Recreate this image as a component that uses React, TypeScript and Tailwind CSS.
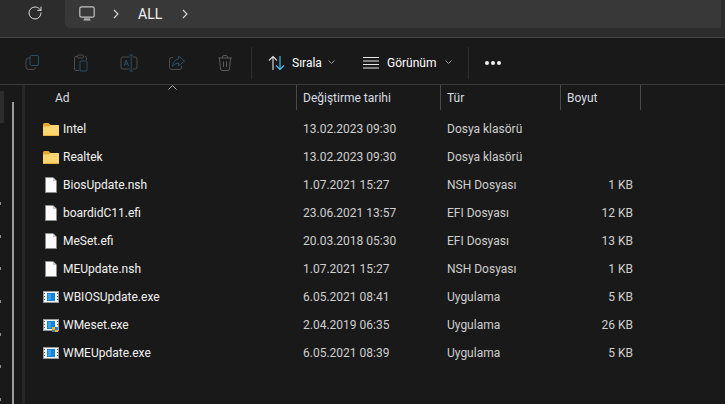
import { RotateCw } from "lucide-react";

type Kind = "folder" | "file" | "exe" | "setup";

interface Row {
    name: string
    date: string
    type: string
    size: string
    kind: Kind
}

const rows: Row[] = [
    { name: "Intel", date: "13.02.2023 09:30", type: "Dosya klasörü", size: "", kind: "folder" },
    { name: "Realtek", date: "13.02.2023 09:30", type: "Dosya klasörü", size: "", kind: "folder" },
    { name: "BiosUpdate.nsh", date: "1.07.2021 15:27", type: "NSH Dosyası", size: "1 KB", kind: "file" },
    { name: "boardidC11.efi", date: "23.06.2021 13:57", type: "EFI Dosyası", size: "12 KB", kind: "file" },
    { name: "MeSet.efi", date: "20.03.2018 05:30", type: "EFI Dosyası", size: "13 KB", kind: "file" },
    { name: "MEUpdate.nsh", date: "1.07.2021 15:27", type: "NSH Dosyası", size: "1 KB", kind: "file" },
    { name: "WBIOSUpdate.exe", date: "6.05.2021 08:41", type: "Uygulama", size: "5 KB", kind: "exe" },
    { name: "WMeset.exe", date: "2.04.2019 06:35", type: "Uygulama", size: "26 KB", kind: "setup" },
    { name: "WMEUpdate.exe", date: "6.05.2021 08:39", type: "Uygulama", size: "5 KB", kind: "exe" },
];

const FileIcon = ({ kind }: { kind: Kind }) => {
    if (kind === "folder") {
        return (
            <svg width="16" height="13" viewBox="0 1 16 13" className="shrink-0">
                <path d="M0 2.5 Q0 1 1.5 1 H5.5 L7.5 3 H16 V5 H0 Z" fill="#e9a52f" />
                <path d="M0 4.5 H6 L7.5 3 H14.5 Q16 3 16 4.5 V12.5 Q16 14 14.5 14 H1.5 Q0 14 0 12.5 Z" fill="#fbd56f" />
                <rect x="0" y="13" width="16" height="1" fill="#eab13f" />
            </svg>
        )
    }
    if (kind === "file") {
        return (
            <svg width="16" height="16" viewBox="0 0 16 16" className="shrink-0">
                <path d="M2.5 .5 H10 L13.5 4 V15.5 H2.5 Z" fill="#fbfbfb" stroke="#8c8c8c" />
                <path d="M10 .5 V4 H13.5 Z" fill="#c8c8c8" />
            </svg>
        )
    }
    return (
        <svg width="16" height="16" viewBox="0 0 16 16" className="shrink-0">
            <rect x="0" y="2" width="16" height="12" fill="#9a9a9a" />
            <rect x="1" y="3" width="14" height="10" fill="#f4f4f4" />
            <path d="M1 4 h1 v1 h-1 z M1 7 h1 v1 h-1 z M1 10 h1 v1 h-1 z M14 4 h1 v1 h-1 z M14 7 h1 v1 h-1 z M14 10 h1 v1 h-1 z" fill="#555555" />
            <rect x="4" y="4" width="8" height="8" fill="#1583d8" />
            <rect x="5" y="5" width="3" height="6" fill="#3aa0ea" />
            {kind === "setup" && (
                <>
                    <rect x="9" y="10" width="3" height="3" fill="#f4b400" />
                    <rect x="12" y="10" width="3" height="3" fill="#2f7fd6" />
                    <rect x="9" y="13" width="3" height="2" fill="#2f7fd6" />
                    <rect x="12" y="13" width="3" height="2" fill="#f4b400" />
                </>
            )}
        </svg>
    )
}

const ToolIcon = ({ children }: { children: React.ReactNode }) => (
    <div className="w-[48px] flex justify-center">
        <svg width="18" height="18" viewBox="0 0 18 18" fill="none" strokeWidth="1">{children}</svg>
    </div>
)

const Chevron = () => (
    <svg width="7" height="5" viewBox="0 0 7 5" fill="none" stroke="#9a9a9a" strokeWidth="1">
        <path d="M.5 .5 L3.5 3.5 L6.5 .5" />
    </svg>
)

const Crumb = () => (
    <svg width="6" height="10" viewBox="0 0 6 10" fill="none" stroke="#d8d8d8" strokeWidth="1.1">
        <path d="M1 1 L5 5 L1 9" />
    </svg>
)

export default function App() {
    return (
        <div className="w-[725px] h-[404px] overflow-hidden flex flex-col bg-[#191919] text-[12px] text-[#e8e8e8]" style={{ fontFamily: 'Roboto, "Noto Sans", sans-serif' }}>
            {/* adres cubugu */}
            <div className="h-[38px] shrink-0 flex bg-[#2c2c2c] border-b border-[#454545]">
                <div className="w-[65px] flex pl-[27px] pt-[5px] text-[#e4e4e4]">
                    <RotateCw size={16} strokeWidth={1.4} />
                </div>
                <div className="w-[656px] h-[28px] flex items-center pl-[14px] bg-[#383838] rounded-bl-[5px] rounded-br-[2px]">
                    <svg width="16" height="16" viewBox="0 0 16 16" fill="none" stroke="#c4c4c4" strokeWidth="1.2">
                        <rect x=".8" y=".8" width="14.4" height="10.4" rx="1.8" />
                        <path d="M4.5 14 H11.5 M6 12 V14 M8 12 V14 M10 12 V14" />
                    </svg>
                    <div className="ml-[18px] flex"><Crumb /></div>
                    <span className="ml-[19px] text-[14px] text-[#f2f2f2]">ALL</span>
                    <div className="ml-[20px] flex"><Crumb /></div>
                </div>
            </div>

            {/* arac cubugu */}
            <div className="h-[47px] shrink-0 flex items-center pl-[9px] pt-[3px] border-b border-[#3c3c3c]">
                <ToolIcon>
                    <rect x="6" y="1.5" width="8.5" height="10" rx="1.5" stroke="#25506b" />
                    <path d="M6 4 H4.5 Q2 4 2 6.5 V13 Q2 15.5 4.5 15.5 H9 Q11.5 15.5 11.5 13.5" stroke="#4d4d4d" />
                </ToolIcon>
                <ToolIcon>
                    <path d="M6 2.5 H4 Q2.5 2.5 2.5 4 V15 Q2.5 16.5 4 16.5 H7 M13 2.5 Q14.5 2.5 14.5 4 V6" stroke="#4d4d4d" />
                    <rect x="5.5" y="1" width="6" height="3" rx="1" stroke="#4d4d4d" />
                    <rect x="8" y="7" width="7" height="10" rx="1" stroke="#25506b" />
                </ToolIcon>
                <ToolIcon>
                    <path d="M9.5 3 H3 Q1 3 1 5 V13 Q1 15 3 15 H9.5 M13 3 H15 Q17 3 17 5 V13 Q17 15 15 15 H13" stroke="#4d4d4d" />
                    <path d="M11.2 1 V17 M9.5 1 H13 M9.5 17 H13" stroke="#25506b" />
                    <path d="M4 12 L6.3 6 L8.6 12 M5 10 H7.6" stroke="#25506b" />
                </ToolIcon>
                <ToolIcon>
                    <path d="M5 3.5 H3.5 Q1.5 3.5 1.5 5.5 V13.5 Q1.5 15.5 3.5 15.5 H11.5 Q13.5 15.5 13.5 13.5 V12" stroke="#4d4d4d" />
                    <path d="M10.5 2 L16.5 7 L10.5 12 V9 Q7 9 4.5 12.5 Q5.5 5.5 10.5 5 Z" stroke="#25506b" />
                </ToolIcon>
                <ToolIcon>
                    <path d="M2 4 H16 M6.5 4 V3 Q6.5 1.5 8 1.5 H10 Q11.5 1.5 11.5 3 V4 M3.5 4 L4.5 15 Q4.7 16.5 6 16.5 H12 Q13.3 16.5 13.5 15 L14.5 4 M7.5 7.5 V13 M10.5 7.5 V13" stroke="#5a5a5a" />
                </ToolIcon>
                <div className="ml-[2px] w-px h-[32px] bg-[#2e2e2e]" />
                <div className="ml-[16px] flex items-center">
                    <svg width="17" height="16" viewBox="0 0 17 16" fill="none" strokeWidth="1.1">
                        <path d="M5 15 V1.5 M1 5.5 L5 1.5 L9 5.5" stroke="#e0e0e0" />
                        <path d="M12 1 V14.5 M8 10.5 L12 14.5 L16 10.5" stroke="#4cc2ff" />
                    </svg>
                    <span className="ml-[7px] w-[30px] text-white">Sırala</span>
                    <div className="ml-[6px] flex"><Chevron /></div>
                </div>
                <div className="ml-[28px] flex items-center">
                    <svg width="16" height="12" viewBox="0 0 16 12" fill="none" stroke="#e8e8e8" strokeWidth="1">
                        <path d="M0 .5 H16 M0 4 H16 M0 7.5 H16 M0 11 H16" />
                    </svg>
                    <span className="ml-[8px] w-[52px] text-white">Görünüm</span>
                    <div className="ml-[6px] flex"><Chevron /></div>
                </div>
                <div className="ml-[16px] w-px h-[32px] bg-[#2e2e2e]" />
                <div className="ml-[16px] flex gap-[2px]">
                    <span className="w-[4px] h-[4px] rounded-full bg-[#f0f0f0]" />
                    <span className="w-[4px] h-[4px] rounded-full bg-[#f0f0f0]" />
                    <span className="w-[4px] h-[4px] rounded-full bg-[#f0f0f0]" />
                </div>
            </div>

            <div className="flex-1 flex min-h-0">
                {/* gezinti bolmesi */}
                <div className="w-[25px] shrink-0 flex">
                    <div className="w-[12px] shrink-0 flex flex-col pt-[6px]">
                        <div className="w-[4px] h-[32px] bg-[#2d2d2d]" />
                        <div className="mt-[79px] flex flex-col gap-[29.7px]">
                            {[0, 1, 2, 3, 4, 5, 6].map((i) => (
                                <div key={i} className="w-px h-[3px] bg-[#8f8f8f]" />
                            ))}
                        </div>
                    </div>
                    <div className="w-[2px] mt-[17px] bg-[#9c9c9c]" />
                    <div className="ml-[8px] w-[3px] bg-[#262626]" />
                </div>

                {/* dosya listesi */}
                <div className="flex-1 min-w-0">
                    <div className="h-[25px] grid grid-cols-[272px_144px_120px_80px] text-[#d8dde2]">
                        <div className="pl-[30px] pt-[4px] border-r border-[#4a4a4a] relative">
                            Ad
                            <svg width="9" height="5" viewBox="0 0 9 5" fill="none" stroke="#b0b0b0" className="absolute left-[143px] top-0">
                                <path d="M.5 4.5 L4.5 .5 L8.5 4.5" />
                            </svg>
                        </div>
                        <div className="pl-[6px] pt-[4px] border-r border-[#4a4a4a]">Değiştirme tarihi</div>
                        <div className="pl-[6px] pt-[4px] border-r border-[#4a4a4a]">Tür</div>
                        <div className="pl-[6px] pt-[4px] border-r border-[#4a4a4a]">Boyut</div>
                    </div>
                    <div className="pt-[5px]">
                        {rows.map((r) => (
                            <div key={r.name} className="h-[28px] grid grid-cols-[272px_144px_120px_80px] items-center">
                                <div className="pl-[18px] flex items-center gap-[4px] text-[#f2f2f2]">
                                    <FileIcon kind={r.kind} />
                                    <span>{r.name}</span>
                                </div>
                                <div className="pl-[6px] text-[#cfcfcf]">{r.date}</div>
                                <div className="pl-[6px] text-[#cfcfcf]">{r.type}</div>
                                <div className="pr-[8px] text-right text-[#cfcfcf]">{r.size}</div>
                            </div>
                        ))}
                    </div>
                </div>
            </div>
        </div>
    )
}
